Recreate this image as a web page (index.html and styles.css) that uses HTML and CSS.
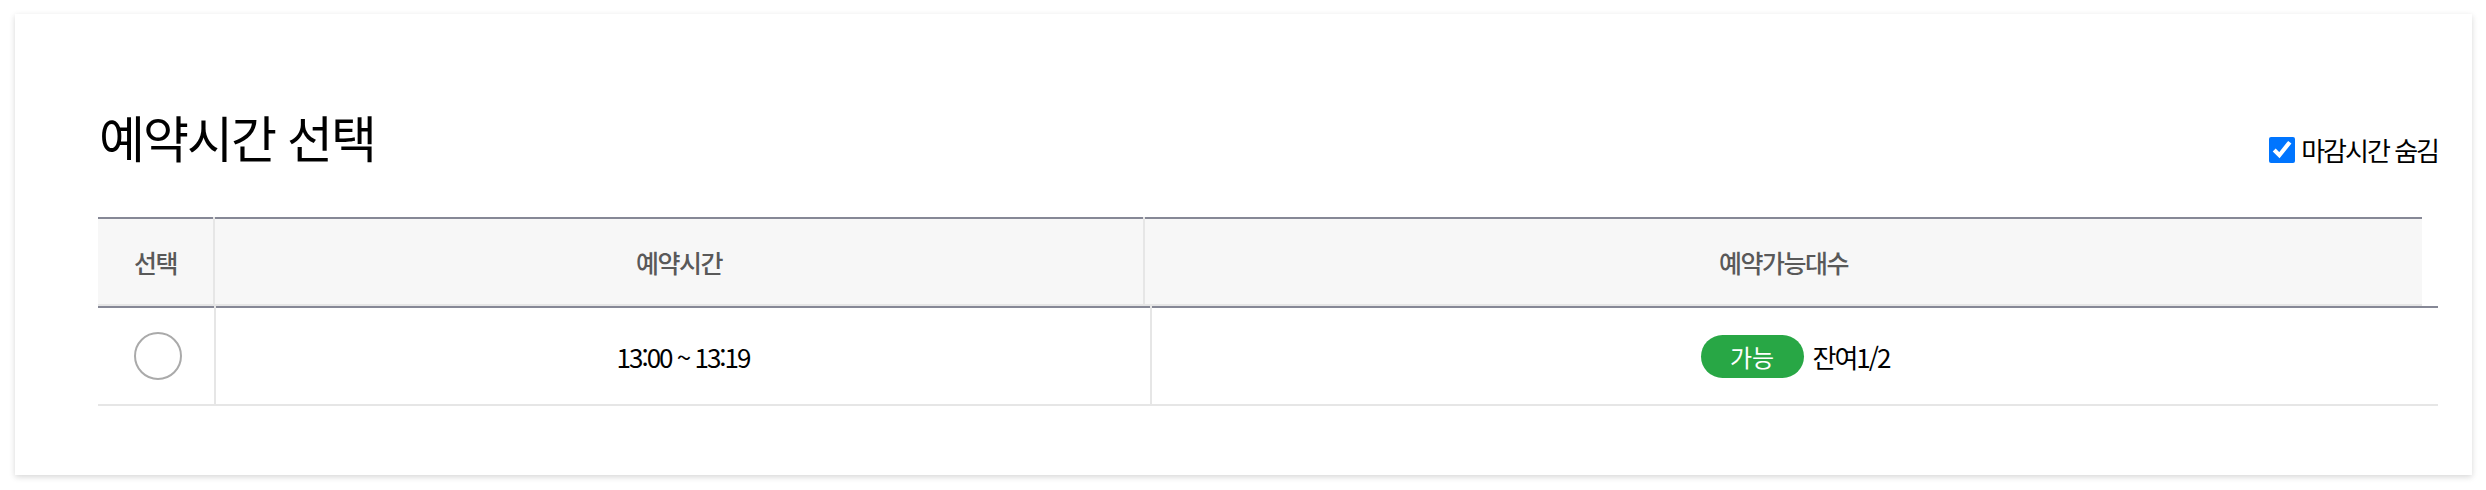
FILE: index.html
```html
<!DOCTYPE html>
<html lang="ko">
<head>
<meta charset="utf-8">
<title>예약시간 선택</title>
<link rel="stylesheet" href="styles.css">
</head>
<body>
<section class="card">
  <div class="card-head">
    <h2 class="title">예약시간 선택</h2>
    <label class="hide-closed">
      <input type="checkbox" class="check" checked>
      <span>마감시간 숨김</span>
    </label>
  </div>
  <div class="table-wrap">
    <table class="tbl tbl-head">
      <colgroup><col class="c1"><col class="c2"><col class="c3"></colgroup>
      <thead>
        <tr><th>선택</th><th>예약시간</th><th>예약가능대수</th></tr>
      </thead>
    </table>
    <table class="tbl tbl-body">
      <colgroup><col class="c1"><col class="c2"><col class="c3"></colgroup>
      <tbody>
        <tr>
          <td><span class="radio"></span></td>
          <td class="time">13:00 ~ 13:19</td>
          <td><span class="avail"><span class="badge">가능</span><span class="remain">잔여1/2</span></span></td>
        </tr>
      </tbody>
    </table>
  </div>
</section>
</body>
</html>
```

FILE: styles.css
```css
html, body {
  margin: 0;
  padding: 0;
  background: #ffffff;
}
body {
  font-family: "Noto Sans CJK KR", "Noto Sans", sans-serif;
  color: #000;
}
.card {
  margin: 14px 14px 15px 15px;
  height: 461px;
  box-sizing: border-box;
  padding: 0 34px 0 83px;
  background: #fff;
  box-shadow: 0 2px 6px rgba(0, 0, 0, 0.16);
}
.card-head {
  display: flex;
  justify-content: space-between;
  align-items: flex-end;
  height: 151px;
  box-sizing: border-box;
}
.title {
  margin: 0 0 4px 1px;
  font-size: 50px;
  font-weight: 400;
  line-height: 1;
  letter-spacing: -2px;
}
.hide-closed {
  display: flex;
  align-items: center;
  gap: 6px;
  margin-bottom: 2px;
  font-size: 26px;
  line-height: 1;
  letter-spacing: -2px;
}
.check {
  width: 26px;
  height: 26px;
  margin: 0;
  accent-color: #0075ff;
}
.table-wrap {
  margin-top: 52px;
}
.tbl {
  border-collapse: collapse;
  table-layout: fixed;
}
.tbl-head {
  width: calc(100% - 16px);
  border-top: 2px solid #868896;
  background: #f7f7f7;
}
.tbl-body {
  width: 100%;
  border-top: 2px solid #868896;
}
.c1 { width: 5%; }
.c2 { width: 40%; }
.c3 { width: 55%; }
.tbl th {
  height: 85px;
  padding: 0;
  font-size: 25px;
  font-weight: 500;
  color: #595959;
  letter-spacing: -1.5px;
  border-left: 2px solid #e6e6e6;
  border-bottom: 2px solid #e6e6e6;
  text-align: center;
}
.tbl td {
  height: 96px;
  padding: 0;
  text-align: center;
  border-left: 2px solid #e6e6e6;
  border-bottom: 2px solid #e6e6e6;
  font-size: 26px;
}
.tbl th:first-child,
.tbl td:first-child {
  border-left: none;
}
.radio {
  display: inline-block;
  width: 44px;
  height: 44px;
  margin-left: 3px;
  border: 2px solid #aaaaaa;
  border-radius: 50%;
  vertical-align: middle;
}
.time {
  letter-spacing: -2px;
}
.avail {
  display: inline-flex;
  align-items: center;
  gap: 9px;
}
.badge {
  display: inline-flex;
  align-items: center;
  justify-content: center;
  width: 103px;
  height: 43px;
  border-radius: 22px;
  background: #28a745;
  color: #fff;
  font-size: 24px;
  letter-spacing: 0;
}
.remain {
  font-size: 26px;
  letter-spacing: -2px;
}
```
